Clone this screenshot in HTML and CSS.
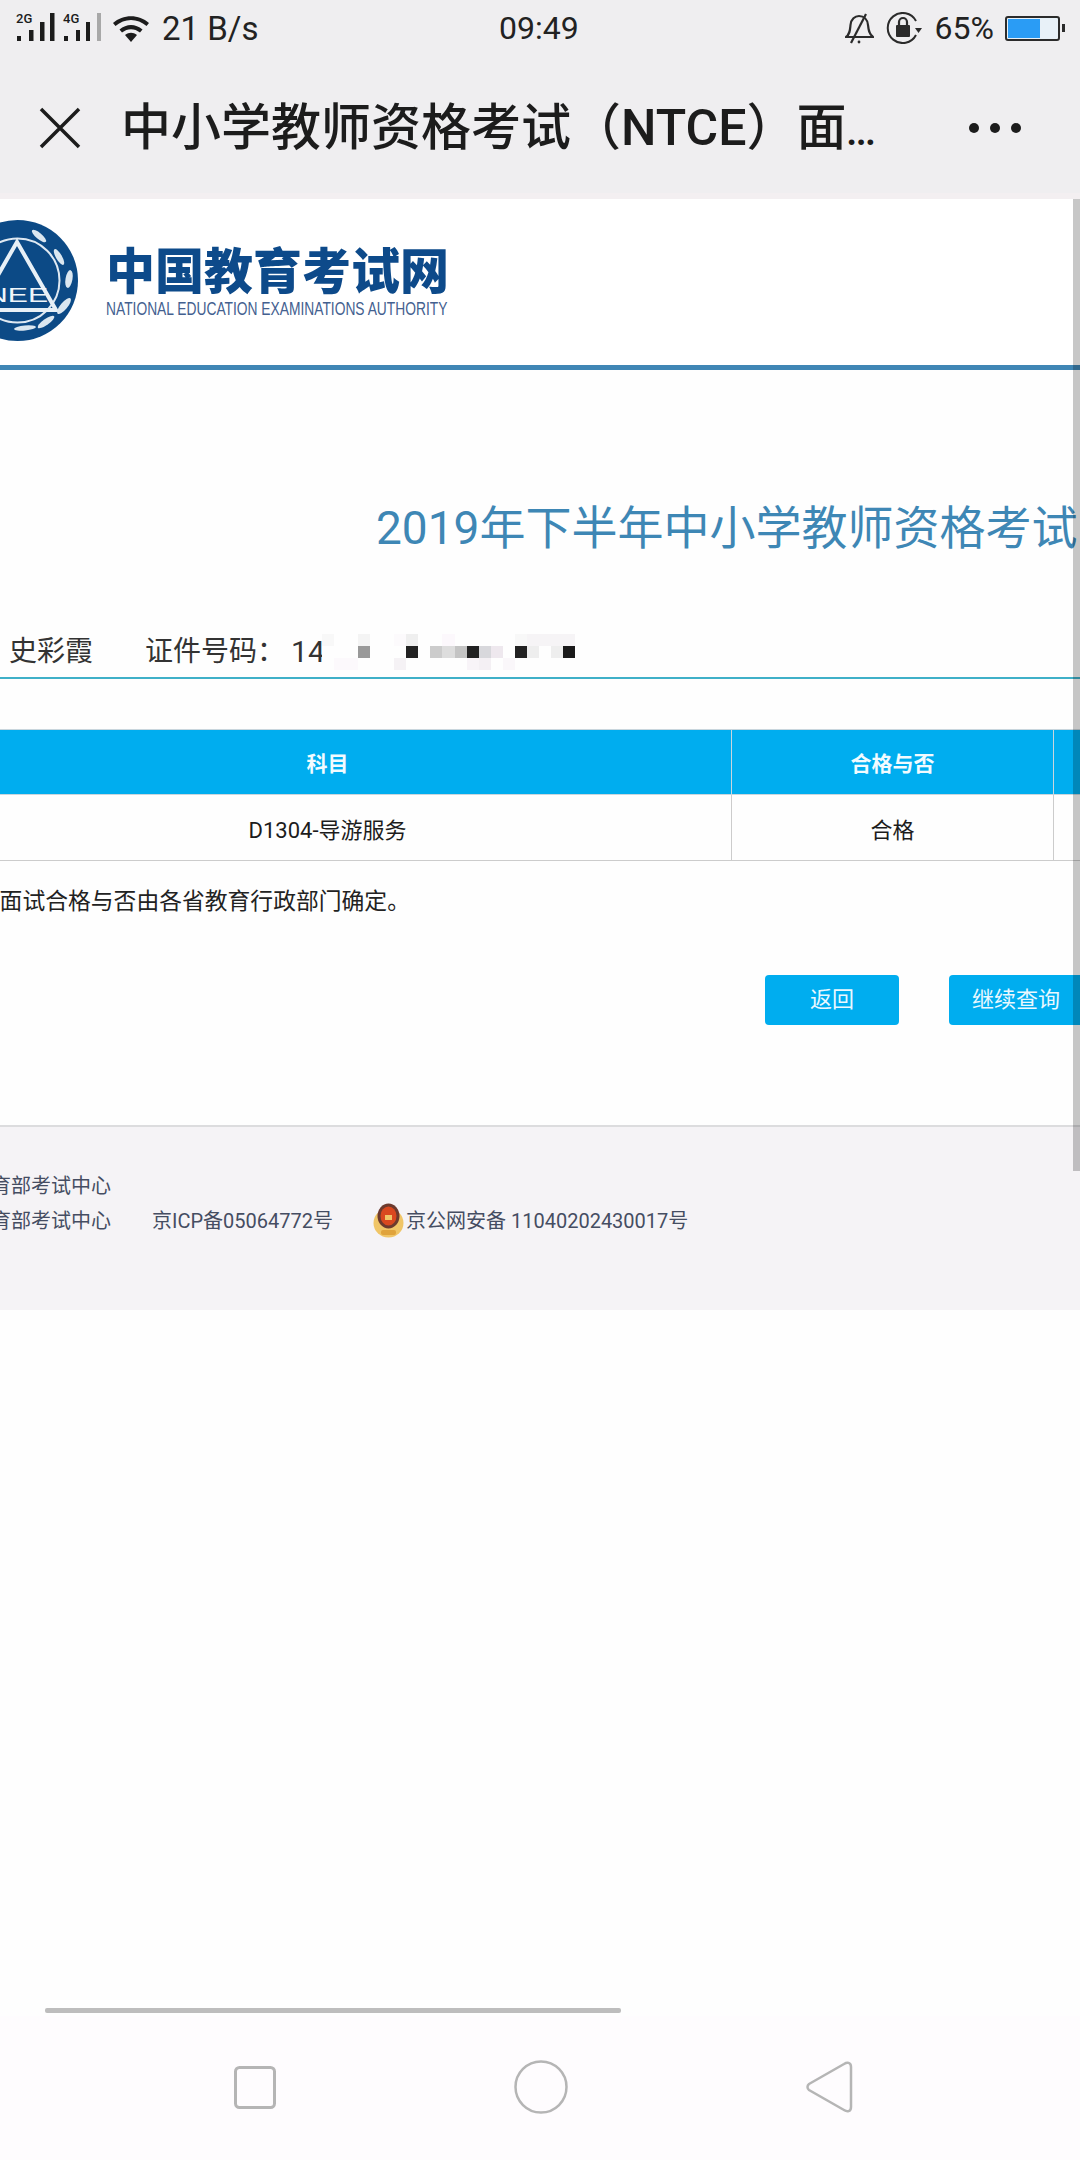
FILE: index.html
```html
<!DOCTYPE html>
<html lang="zh-CN">
<head>
<meta charset="utf-8">
<title>中小学教师资格考试（NTCE）面试成绩查询</title>
<link rel="stylesheet" href="styles.css">
</head>
<body>
<div class="phone">
  <div class="status">
    <div class="status-left">
      <svg class="signal" width="90" height="32" viewBox="0 0 90 32">
        <text x="0" y="11" class="sig-label">2G</text>
        <rect x="1" y="24" width="4" height="5"/><rect x="13" y="18" width="4.500" height="11"/><rect x="24" y="10" width="4.500" height="19"/><rect x="34" y="1" width="4.500" height="28"/>
        <text x="47" y="11" class="sig-label">4G</text>
        <rect x="48" y="24" width="4" height="5"/><rect x="60" y="18" width="4" height="11"/><rect x="70" y="10" width="4" height="19"/><rect x="81" y="1" width="4" height="28" class="sig-off"/>
      </svg>
      <svg class="wifi" width="38" height="27" viewBox="0 0 38 27">
        <path d="M1 8C11-1 27-1 37 8l-2.500 3C25.500 3 12.500 3 3.500 11Z" fill="#1c1c1c"/>
        <path d="M7.500 14.500c7-6 16-6 23 0l-2.500 3c-5.500-4.500-12.500-4.500-18 0Z" fill="#1c1c1c"/>
        <path d="M13 20c4-3 8-3 12 0l-6 7Z" fill="#1c1c1c"/>
      </svg>
      <span class="status-text status-speed">21 B/s</span>
    </div>
    <span class="status-text status-time">09:49</span>
    <div class="status-right">
      <svg width="29" height="31" viewBox="0 0 29 31" fill="none" stroke="#2b2b2b" stroke-width="2.200">
        <path d="M1 24c4-3 4-7 4.500-12C6 6 10 3 14 3c5 0 8.500 3.500 9 9 .5 5 1 9 5 12Z"/>
        <path d="M6 30 21 1"/>
        <circle cx="14" cy="29" r="1.400" fill="#2b2b2b" stroke="none"/>
      </svg>
      <svg class="rotlock" width="36" height="32" viewBox="0 0 36 32" fill="none">
        <path d="M30 9A15 15 0 1 0 30 23" stroke="#2b2b2b" stroke-width="2"/>
        <path d="M29 16h7l-3.500 5Z" fill="#2b2b2b"/>
        <rect x="10" y="13" width="14" height="12" rx="1" fill="#2b2b2b"/>
        <path d="M13 13V10a4 4 0 0 1 8 0v3" stroke="#2b2b2b" stroke-width="2.200"/>
      </svg>
      <span class="status-text status-pct">65%</span>
      <div class="battery"><div class="battery-fill"></div></div>
      <div class="battery-nub"></div>
    </div>
  </div>

  <div class="appbar">
    <svg class="close" width="42" height="42" viewBox="0 0 42 42"><path d="M2 2 40 40M40 2 2 40" stroke="#1c1c1c" stroke-width="3.500" fill="none"/></svg>
    <h1 class="apptitle">中小学教师资格考试（NTCE）面<span class="dots-text">...</span></h1>
    <div class="more"><i></i><i></i><i></i></div>
  </div>

  <main class="viewport">
    <div class="sheet">
      <header class="brand">
        <svg class="emblem" width="121" height="121" viewBox="0 0 121 121">
          <circle cx="60.500" cy="60.500" r="60.500" fill="#0c4a86"/>
          <circle cx="60.500" cy="60.500" r="42" fill="none" stroke="#dfe9f2" stroke-width="2"/>
          <path d="M60 22 99 90H21Z" fill="none" stroke="#e8f0f6" stroke-width="4"/>
          <text x="29" y="82" class="emblem-text" textLength="62" lengthAdjust="spacingAndGlyphs">NEE</text>
          <g fill="#dbe7f0">
            <ellipse cx="82" cy="16" rx="9" ry="3" transform="rotate(40 82 16)"/>
            <ellipse cx="102" cy="37" rx="9" ry="3" transform="rotate(60 102 37)"/>
            <ellipse cx="112" cy="59" rx="9" ry="3.500" transform="rotate(-80 112 59)"/>
            <ellipse cx="107" cy="86" rx="10" ry="3.500" transform="rotate(-50 107 86)"/>
            <ellipse cx="89" cy="102" rx="10" ry="3" transform="rotate(-35 89 102)"/>
            <ellipse cx="68" cy="108" rx="11" ry="2.500" transform="rotate(-5 68 108)"/>
          </g>
        </svg>
        <div class="brand-words">
          <div class="brand-cn">中国教育考试网</div>
          <div class="brand-en">NATIONAL EDUCATION EXAMINATIONS AUTHORITY</div>
        </div>
      </header>
      <h2 class="exam-title">2019年下半年中小学教师资格考试</h2>
      <div class="info">
        <span class="info-name">史彩霞</span>
        <span class="info-label">证件号码：</span><span class="info-id">14</span>
        <svg class="mosaic" width="253" height="36" viewBox="0 0 21 3" preserveAspectRatio="none">
          <g shape-rendering="crispEdges">
            <rect x="0" y="0" width="1" height="1" fill="#f8f8f8"/><rect x="3" y="0" width="1" height="1" fill="#f4f4f4"/><rect x="6" y="0" width="1" height="1" fill="#fcfafc"/><rect x="7" y="0" width="1" height="1" fill="#efefef"/><rect x="10" y="0" width="1" height="1" fill="#fcf8fc"/><rect x="16" y="0" width="1" height="1" fill="#f8f8f8"/><rect x="17" y="0" width="4" height="1" fill="#f6f4f6"/>
            <rect x="3" y="1" width="1" height="1" fill="#999"/><rect x="7" y="1" width="1" height="1" fill="#222"/><rect x="9" y="1" width="1" height="1" fill="#ccc"/><rect x="10" y="1" width="1" height="1" fill="#ddd"/><rect x="11" y="1" width="1" height="1" fill="#c4c4c4"/><rect x="12" y="1" width="1" height="1" fill="#222"/><rect x="13" y="1" width="1" height="1" fill="#d8d8dc"/><rect x="14" y="1" width="1" height="1" fill="#eee8ee"/><rect x="16" y="1" width="1" height="1" fill="#222"/><rect x="17" y="1" width="1" height="1" fill="#eee"/><rect x="19" y="1" width="1" height="1" fill="#eee"/><rect x="20" y="1" width="1" height="1" fill="#1a1a1a"/>
            <rect x="1" y="2" width="2" height="1" fill="#fcf9fc"/><rect x="6" y="2" width="1" height="1" fill="#f5f2f5"/><rect x="12" y="2" width="1" height="1" fill="#f8f4f8"/><rect x="13" y="2" width="1" height="1" fill="#f4f0f4"/><rect x="15" y="2" width="1" height="1" fill="#faf7fa"/>
          </g>
        </svg>
      </div>
      <table class="result">
        <thead><tr><th class="col-subject">科目</th><th class="col-pass">合格与否</th><th class="col-rest"></th></tr></thead>
        <tbody><tr><td>D1304-导游服务</td><td>合格</td><td></td></tr></tbody>
      </table>
      <p class="note">注：面试合格与否由各省教育行政部门确定。</p>
      <div class="actions">
        <a class="btn btn-back">返回</a>
        <a class="btn btn-next">继续查询</a>
      </div>
      <footer class="foot">
        <div class="foot-line">主办单位：教育部考试中心</div>
        <div class="foot-line foot-second">
          <span class="foot-a">承办单位：教育部考试中心</span>
          <span class="foot-b">京ICP备05064772号</span>
          <svg class="police" width="31" height="35" viewBox="0 0 31 35">
            <ellipse cx="15.500" cy="20" rx="15" ry="14.500" fill="#f0c567"/>
            <ellipse cx="15.500" cy="13" rx="11" ry="12.500" fill="#6d3a2e"/>
            <ellipse cx="15.500" cy="13" rx="8" ry="9.500" fill="#d9481f"/>
            <rect x="12" y="12" width="7" height="5" fill="#f0c567"/>
            <rect x="8" y="27" width="15" height="5" rx="2" fill="#e0a33c"/>
          </svg>
          <span class="foot-c">京公网安备 11040202430017号</span>
        </div>
      </footer>
    </div>
    <div class="vscroll"></div>
    <div class="hscroll"></div>
  </main>

  <nav class="navbar">
    <svg width="42" height="43" viewBox="0 0 42 43" fill="none"><rect x="1.500" y="1.500" width="39" height="40" rx="4" stroke="#b5b5b5" stroke-width="3"/></svg>
    <svg width="54" height="54" viewBox="0 0 54 54" fill="none"><circle cx="27" cy="27" r="25.500" stroke="#b5b5b5" stroke-width="2.500"/></svg>
    <svg width="48" height="52" viewBox="0 0 48 52" fill="none"><path d="M3 23 38 3c3-2 7-2 7 3v40c0 5-4 5-7 3L3 29c-2-1.500-2-4.500 0-6Z" stroke="#b5b5b5" stroke-width="2.500"/></svg>
  </nav>
</div>
</body>
</html>
```
FILE: styles.css
```css
* { box-sizing: border-box; }
html, body { margin: 0; padding: 0; background: #fff; }
body { font-family: Roboto, "Noto Sans CJK SC", sans-serif; }
.phone { width: 1080px; height: 2160px; display: flex; flex-direction: column; overflow: hidden; position: relative; background: #fefefe; }

.status { height: 56px; flex: none; background: #efeef0; display: flex; align-items: center; justify-content: space-between; padding: 0 15px 0 16px; position: relative; }
.status-left { display: flex; align-items: center; }
.signal rect { fill: #1c1c1c; }
.signal .sig-off { fill: #a8a8a8; }
.sig-label { font: 500 13px Roboto, sans-serif; fill: #1c1c1c; }
.wifi { margin-left: 6px; }
.status-text { font-size: 32px; color: #222; line-height: 1; }
.status-speed { font-size: 33px; margin-left: 12px; }
.status-time { position: absolute; left: 499px; top: 12px; }
.status-right { display: flex; align-items: center; }
.rotlock { margin-left: 12px; }
.status-pct { margin-left: 13px; margin-right: 11px; }
.battery { width: 55px; height: 25px; border: 2px solid #2b2b2b; border-radius: 3px; background: #e8f1f8; padding: 1px; }
.battery-fill { width: 32px; height: 100%; background: #2a9cf5; }
.battery-nub { width: 3px; height: 8px; margin-left: 2px; background: #2b2b2b; }

.appbar { height: 143px; flex: none; background: #efeef0; border-bottom: 6px solid #f3eff1; display: flex; align-items: center; padding: 6px 0 0 39px; position: relative; }
.apptitle { margin: 0 0 0 40px; font-size: 50px; font-weight: 500; color: #1c1c1c; line-height: 1; white-space: nowrap; }
.dots-text { font-size: 36px; font-weight: 700; letter-spacing: -1px; }
.more { margin-left: auto; margin-right: 59px; display: flex; gap: 11px; }
.more i { display: block; width: 10px; height: 10px; border-radius: 50%; background: #1c1c1c; }

.viewport { flex: 1; position: relative; overflow: hidden; background: #fefefe; }
.sheet { width: 1400px; margin-left: -77px; }
.brand { height: 171px; border-bottom: 5px solid #3f86b5; background: #fff; display: flex; align-items: flex-start; padding: 21px 0 0 34px; }
.brand-words { margin: 25px 0 0 28px; width: 345px; }
.brand-cn { font: 900 49px/46px "Noto Sans CJK SC", sans-serif; color: #0d4a8a; white-space: nowrap; }
.brand-en { font: 400 17.700px/16px "Liberation Sans", sans-serif; color: #43608f; margin-top: 10px; white-space: nowrap; transform: scaleX(.78); transform-origin: left center; }
.emblem-text { font: 400 21px "Liberation Sans", sans-serif; fill: #f0f6fa; }

.exam-title { margin: 0; padding: 133px 0 0 453px; height: 217px; font-size: 46px; font-weight: 400; line-height: 50px; color: #3e87b5; white-space: nowrap; }
.info { height: 92px; border-bottom: 2px solid #3fb0c8; display: flex; align-items: flex-start; padding: 47px 0 0 86px; font-size: 28px; line-height: 36px; color: #333; }
.info-label { margin-left: 52px; }
.info-id { width: 31px; margin-left: 6px; overflow: hidden; font-size: 30px; }
.mosaic { flex: none; }

.result { border-collapse: collapse; margin-top: 50px; table-layout: fixed; width: 1400px; font-size: 22px; }
.result th { height: 65px; background: #00adef; color: #f2fbff; font-size: 21px; font-weight: 700; border: 1.500px solid #c9d6dd; }
.result td { height: 66px; color: #1c1c1c; font-weight: 400; text-align: center; border: 1.500px solid #ccc; border-top: 0; }
.col-subject { width: 808px; }
.col-pass { width: 322px; }
.note { margin: 25px 0 0 0; font-size: 22.800px; line-height: 32px; color: #222; white-space: nowrap; padding-left: 31px; }

.actions { display: flex; margin: 57px 0 0 842px; gap: 50px; }
.btn { display: block; height: 50px; background: #00adef; color: #eaf8ff; border-radius: 4px; font-size: 22px; line-height: 50px; text-align: center; }
.btn-back { width: 134px; }
.btn-next { width: 134px; }

.foot { margin-top: 100px; height: 185px; background: #f5f3f6; border-top: 2px solid #dcdcde; padding: 42px 0 0 0; font-size: 20px; line-height: 34px; color: #454d62; }
.foot-line { white-space: nowrap; margin-left: -52px; }
.foot-second { display: flex; align-items: center; }
.foot-b { margin-left: 41px; }
.police { margin-left: 40px; flex: none; }
.foot-c { margin-left: 2px; }

.vscroll { position: absolute; right: 0; top: 0; width: 7px; height: 972px; background: rgba(0, 0, 0, .22); }
.hscroll { position: absolute; left: 45px; bottom: 3px; width: 576px; height: 5px; border-radius: 2px; background: #bdbdbd; }

.navbar { height: 144px; flex: none; background: #fefcfe; position: relative; display: flex; align-items: center; padding: 0 226px 2px 234px; justify-content: space-between; }
```
